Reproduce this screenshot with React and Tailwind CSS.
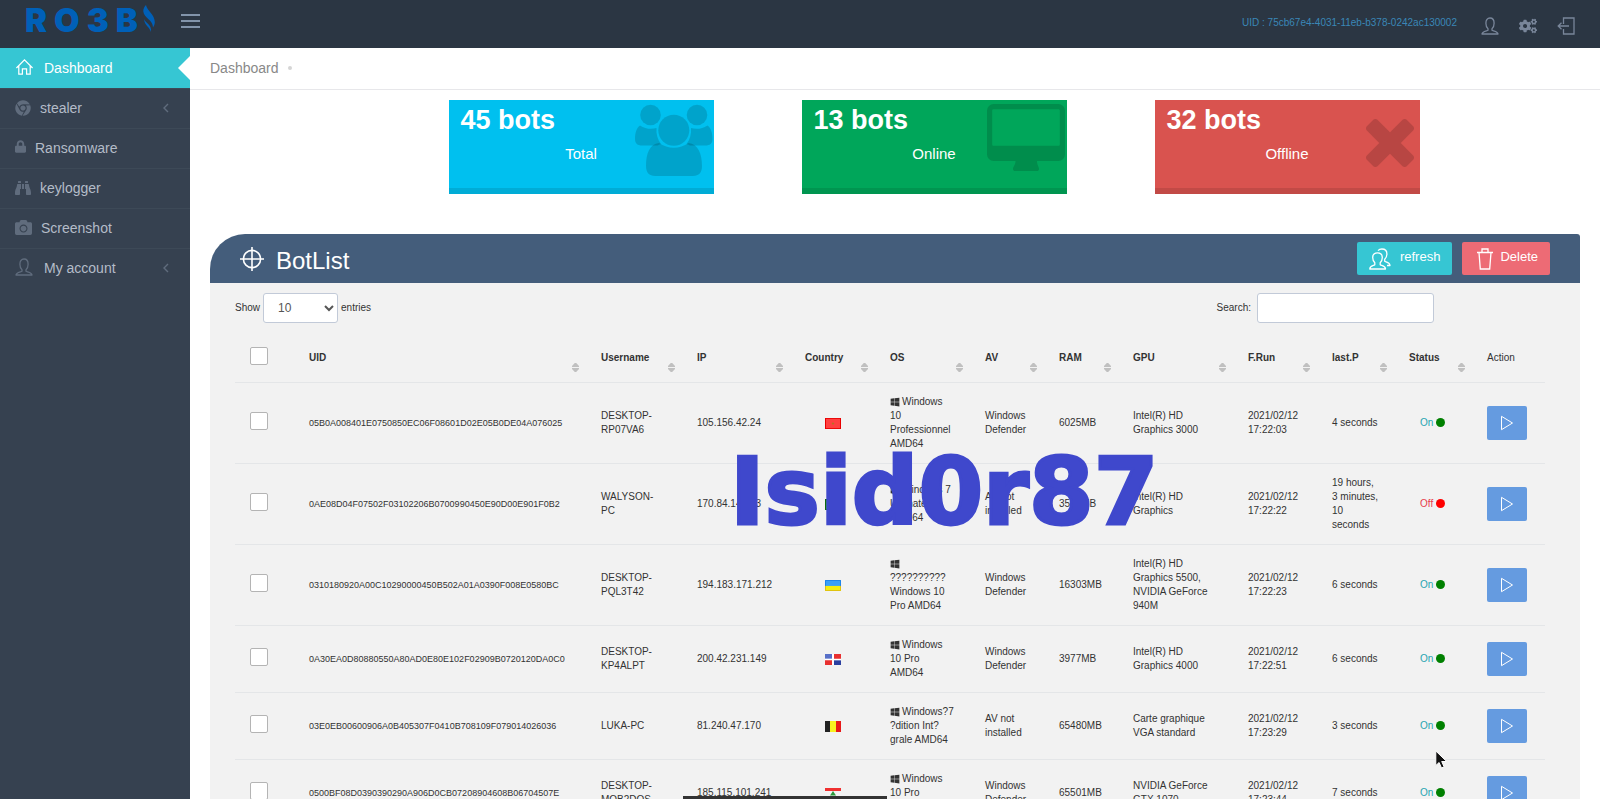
import React from "react";
import { FaChrome, FaLock, FaBinoculars, FaCamera, FaWindows, FaCogs } from "react-icons/fa";

const Line = ({ className, vb = "0 0 24 24", width = 1.2, children }) => (
  <svg className={className} viewBox={vb} fill="none" stroke="currentColor" strokeWidth={width} aria-hidden="true">
    {children}
  </svg>
);

const UserIcon = ({ className }) => (
  <Line className={className} vb="0 0 18 18" width={1.3}>
    <path d="M7 11.8C5.600 10.600 4.900 8.900 4.900 6.200 4.900 3 6.400 1 9 1s4.100 2 4.100 5.200c0 2.700-.7 4.400-2.100 5.600v1.400c1 .7 6 1.200 6 3.800H1c0-2.600 5-3.100 6-3.800z" strokeLinejoin="round" />
  </Line>
);

const HomeIcon = ({ className }) => (
  <Line className={className} vb="0 0 20 20" width={1.3}>
    <path d="M1.500 10.500 10 2l8.500 8.500M4 8.500V17h3.800v-5.500h4.400V17H16V8.500" />
  </Line>
);

const LogoutIcon = ({ className }) => (
  <Line className={className} vb="0 0 18 18" width={1.3}>
    <path d="M6.500 7V1h10.500v16H6.500v-5M12 9H1.200M4.500 5.800 1.200 9l3.300 3.200" />
  </Line>
);

const TargetIcon = ({ className }) => (
  <Line className={className} width={1.6}>
    <circle cx="12" cy="12" r="8.600" />
    <path d="M12 0v24M0 12h24" />
  </Line>
);

const UsersIcon = ({ className }) => (
  <Line className={className} vb="0 0 22 22" width={1.3}>
    <path d="M5.800 14.800C4.500 13.500 3.700 11.700 3.700 9.500 3.700 6.600 5.600 4.800 8.500 4.800s4.800 1.800 4.800 4.700c0 2.200-.8 4-2.100 5.300v2c1 .9 5.300 1 5.300 4.200H.8c0-3.200 4-3.300 5-4.200z" strokeLinejoin="round" />
    <path d="M9 2.600C9.900 1.600 11.200 1 12.900 1c3.200 0 5 1.900 5 4.900 0 2.300-.8 4.100-2.200 5.400v2c1 .8 5.200 1.100 5.300 4.200h-3" strokeLinejoin="round" />
  </Line>
);

const TrashIcon = ({ className }) => (
  <Line className={className} vb="0 0 18 22" width={1.3}>
    <path d="M1 4.500h16M6 4.500V1h6v3.500M3 4.500l1.300 16.500h9.400L15 4.500" />
  </Line>
);

const PlayIcon = ({ className }) => (
  <Line className={className} vb="0 0 14 16" width={1}>
    <path d="M1.500 1.300v13.400L12.500 8z" />
  </Line>
);

const Chevron = () => (
  <Line className="h-3 w-2" vb="0 0 8 12" width={1.4}>
    <path d="M6 2 2 6l4 4" />
  </Line>
);

const PeopleArt = () => (
  <svg className="h-[74px] w-[78px]" viewBox="0 0 78 74" fill="currentColor" aria-hidden="true">
    <circle cx="15.500" cy="11" r="10.300" />
    <circle cx="62" cy="11" r="10.300" />
    <circle cx="38.800" cy="26.300" r="15.500" />
    <path d="M5 21.500c5.500 3.700 11.500 4 16.500 2.500-.5 6 1 11.500 4.500 16-2 .5-2.500 1-3.500 1.500H7c-4.500 0-7-2-7-6.500C0 29 1.500 24 5 21.500z" />
    <path d="M72.500 21.500c-5.500 3.700-11.500 4-16.500 2.500.5 6-1 11.500-4.500 16 2 .5 2.500 1 3.500 1.500h15.500c4.500 0 7-2 7-6.500 0-6-1.500-11-5-13.500z" />
    <path d="M24 39c9 6.300 20.600 6.300 29.600 0C63 40 67 49.500 67 62c0 6.500-3 10-9 10H20c-6 0-9-3.500-9-10 0-12.500 3.600-22 13-23z" />
  </svg>
);

const DesktopArt = () => (
  <svg className="h-[68px] w-[78px]" viewBox="0 0 78 68" fill="currentColor" aria-hidden="true">
    <path fillRule="evenodd" d="M6.500 0h65A6.500 6.500 0 0 1 78 6.500v44a6.500 6.500 0 0 1-6.500 6.500H50c0 4 2 5.500 2 8 0 1.500-1 2-2 2H28c-1 0-2-.5-2-2 0-2.500 2.500-4 2.500-8h-22A6.500 6.500 0 0 1 0 50.500v-44A6.500 6.500 0 0 1 6.500 0zM6.500 5.200a1.300 1.300 0 0 0-1.300 1.300v34c0 .7.600 1.300 1.300 1.300h65c.7 0 1.300-.6 1.300-1.300v-34c0-.7-.6-1.300-1.300-1.300z" />
  </svg>
);

const CrossArt = () => (
  <svg className="h-12 w-12" viewBox="0 0 48 48" fill="currentColor" aria-hidden="true">
    <path d="M11.500.8 24 13.200 36.500.8c1.500-1.100 3-1.100 4.200 0l6.500 6.500c1.100 1.300 1.100 2.900 0 4.200L34.800 24l12.400 12.500c1.100 1.300 1.100 2.900 0 4.200l-6.500 6.500c-1.200 1.100-2.700 1.100-4.200 0L24 34.800 11.500 47.200c-1.500 1.100-3 1.100-4.200 0L.8 40.700c-1.100-1.300-1.100-2.900 0-4.200L13.200 24 .8 11.500c-1.100-1.300-1.100-2.900 0-4.200L7.300.8c1.200-1.100 2.700-1.100 4.200 0z" />
  </svg>
);

const FLAGS = {
  ma: (
    <>
      <rect width="16" height="13" fill="#ff4040" />
      <rect x=".5" y=".5" width="15" height="12" fill="none" stroke="#e80000" />
      <path d="M8 4.500 9 8 6.300 6h3.400L7 8z" fill="#a87820" />
    </>
  ),
  br: (
    <>
      <rect width="16" height="13" fill="#39a339" />
      <rect x=".5" y=".5" width="15" height="12" fill="none" stroke="#0c6a0c" />
      <path d="M8 2l6 4.500L8 11 2 6.500z" fill="#f4ee3c" />
      <circle cx="8" cy="6.500" r="2.800" fill="#3a6cc8" />
    </>
  ),
  ua: (
    <>
      <rect width="16" height="13" fill="#f5ee10" />
      <rect width="16" height="7" fill="#3aa0f8" />
      <path d="M.5 7V.5h15V7" fill="none" stroke="#1b80e8" />
      <path d="M.5 7v5.500h15V7" fill="none" stroke="#dcbc10" />
    </>
  ),
  do: (
    <>
      <rect width="16" height="13" fill="#fff" />
      <path d="M0 0h7v5.500H0z" fill="#5870c8" />
      <path d="M9 7.500h7V13H9z" fill="#2c40a0" />
      <path d="M9 0h7v5.500H9zM0 7.500h7V13H0z" fill="#e83030" />
    </>
  ),
  be: (
    <>
      <rect width="16" height="13" fill="#f8f020" />
      <path d="M0 0h5v13H0z" fill="#222" />
      <path d="M11 0h5v13h-5z" fill="#e81818" />
    </>
  ),
  lb: (
    <>
      <rect width="16" height="13" fill="#f4f4f4" />
      <path d="M0 0h16v3.500H0zM0 9.500h16V13H0z" fill="#f03030" />
      <path d="M8 3.500l3 5.500H5z" fill="#2c9a3c" />
    </>
  ),
};

const Flag = ({ code }) => (
  <svg className="mx-auto mt-0.5 h-[11px] w-4" viewBox="0 0 16 13" preserveAspectRatio="none" role="img" aria-label={code}>
    {FLAGS[code]}
  </svg>
);

const MENU = [
  { label: "Dashboard", icon: <HomeIcon className="-mt-0.5 mr-px h-[19px] w-[19px]" />, active: true },
  { label: "stealer", icon: <FaChrome className="h-4 w-4" />, more: true },
  { label: "Ransomware", icon: <FaLock className="-mt-0.5 h-[13px] w-[11px]" /> },
  { label: "keylogger", icon: <FaBinoculars className="h-4 w-4" /> },
  { label: "Screenshot", icon: <FaCamera className="h-[17px] w-[17px]" /> },
  { label: "My account", icon: <UserIcon className="-mt-0.5 mr-0.5 h-[18px] w-[18px]" />, more: true },
];

const STATS = [
  { count: "45 bots", label: "Total", box: "bg-[#00c0ef]", art: "top-1 right-px", Art: PeopleArt },
  { count: "13 bots", label: "Online", box: "bg-[#00a65a]", art: "top-1 right-0.5", Art: DesktopArt },
  { count: "32 bots", label: "Offline", box: "bg-[#d9534f]", art: "top-[19px] right-1.5", Art: CrossArt },
];

const COLUMNS = [
  ["UID", "w-[292px]"],
  ["Username", "w-[96px]"],
  ["IP", "w-[108px]"],
  ["Country", "w-[85px]"],
  ["OS", "w-[95px]"],
  ["AV", "w-[74px]"],
  ["RAM", "w-[74px]"],
  ["GPU", "w-[115px]"],
  ["F.Run", "w-[84px]"],
  ["last.P", "w-[77px]"],
  ["Status", "w-[78px]"],
];

const ROWS = [
  { uid: "05B0A008401E0750850EC06F08601D02E05B0DE04A076025", user: "DESKTOP-RP07VA6", ip: "105.156.42.24", flag: "ma", os: "Windows 10 Professionnel AMD64", av: "Windows Defender", ram: "6025MB", gpu: "Intel(R) HD Graphics 3000", run: "2021/02/12 17:22:03", last: "4 seconds", on: true },
  { uid: "0AE08D04F07502F03102206B0700990450E90D00E901F0B2", user: "WALYSON-PC", ip: "170.84.149.73", flag: "br", os: "Windows 7 Ultimate AMD64", av: "AV not installed", ram: "3583MB", gpu: "Intel(R) HD Graphics", run: "2021/02/12 17:22:22", last: "19 hours, 3 minutes, 10 seconds", on: false },
  { uid: "0310180920A00C10290000450B502A01A0390F008E0580BC", user: "DESKTOP-PQL3T42", ip: "194.183.171.212", flag: "ua", os: "?????????? Windows 10 Pro AMD64", av: "Windows Defender", ram: "16303MB", gpu: "Intel(R) HD Graphics 5500, NVIDIA GeForce 940M", run: "2021/02/12 17:22:23", last: "6 seconds", on: true },
  { uid: "0A30EA0D80880550A80AD0E80E102F02909B0720120DA0C0", user: "DESKTOP-KP4ALPT", ip: "200.42.231.149", flag: "do", os: "Windows 10 Pro AMD64", av: "Windows Defender", ram: "3977MB", gpu: "Intel(R) HD Graphics 4000", run: "2021/02/12 17:22:51", last: "6 seconds", on: true },
  { uid: "03E0EB00600906A0B405307F0410B708109F079014026036", user: "LUKA-PC", ip: "81.240.47.170", flag: "be", os: "Windows?7 ?dition Int?grale AMD64", av: "AV not installed", ram: "65480MB", gpu: "Carte graphique VGA standard", run: "2021/02/12 17:23:29", last: "3 seconds", on: true },
  { uid: "0500BF08D0390390290A906D0CB07208904608B06704507E", user: "DESKTOP-MOB2DOS", ip: "185.115.101.241", flag: "lb", os: "Windows 10 Pro AMD64", av: "Windows Defender", ram: "65501MB", gpu: "NVIDIA GeForce GTX 1070", run: "2021/02/12 17:23:44", last: "7 seconds", on: true },
];

const Check = ({ label }) => (
  <input
    type="checkbox"
    aria-label={label}
    className="-mt-1 block h-[18px] w-[18px] appearance-none rounded-[2px] border border-[#b4b4b4] bg-white checked:bg-[#36c6d3]"
  />
);

const SortIcon = () => (
  <svg className="absolute right-[7px] bottom-2.5 h-[9px] w-[7px]" viewBox="0 0 7 9" fill="#c0c0c0" aria-hidden="true">
    <path d="M0 4V3L2.800 0h1.400L7 3v1zM0 5v1l2.800 3h1.400L7 6V5z" />
  </svg>
);

function Header() {
  return (
    <header className="flex h-12 shrink-0 items-start bg-[#2b3643]">
      <a href="#home" className="ml-[25px] flex h-10 items-center gap-[7px] font-['Inter',sans-serif] text-[33px] leading-10 font-black text-[#0060b8]">
        <span>R</span>
        <span>O</span>
        <span>3</span>
        <span>B</span>
        <svg className="-mt-1 -ml-0.5 h-[27px] w-3" viewBox="0 0 12 27" fill="currentColor" aria-hidden="true">
          <path d="M3 0C3.500 5 12 9.500 11.800 17.500 11.600 19.500 11 21 10 22.500 10.200 15 1 13 .3 6.500 0 4 1.500 1.500 3 0z" />
          <path d="M1 14c1.500 4 8 5.500 7 13C7 22.500 1.500 20.500 1 14z" />
        </svg>
      </a>
      <button type="button" aria-label="Toggle menu" className="mt-3.5 ml-[26px] flex w-[19px] flex-col gap-1">
        <span className="h-0.5 w-full bg-[#8294aa]" />
        <span className="h-0.5 w-full bg-[#8294aa]" />
        <span className="h-0.5 w-full bg-[#8294aa]" />
      </button>
      <nav className="ml-auto flex items-start pr-[25px] text-[#79869a]">
        <span className="mt-4 mr-6 text-[10px] leading-[14px] text-[#3a87b7]">UID : 75cb67e4-4031-11eb-b378-0242ac130002</span>
        <a href="#profile" aria-label="Profile" className="mt-[17px] mr-5"><UserIcon className="h-[18px] w-[18px]" /></a>
        <a href="#settings" aria-label="Settings" className="mt-4 mr-5"><FaCogs className="h-5 w-[18px]" /></a>
        <a href="#logout" aria-label="Log out" className="mt-[17px]"><LogoutIcon className="h-[18px] w-[18px]" /></a>
      </nav>
    </header>
  );
}

function Sidebar() {
  return (
    <aside className="w-[190px] shrink-0 bg-[#364150]">
      <ul>
        {MENU.map((m) => (
          <li key={m.label} className={m.active ? "bg-[#36c6d3] text-white" : "border-t border-[#3d4957] text-[#b4bcc8]"}>
            <a href={"#" + m.label} className={m.active ? "relative flex h-10 items-center pl-[15px]" : "flex h-[39px] items-center pr-5 pb-0.5 pl-[15px]"}>
              <span className={m.active ? "mr-[9px]" : "mr-[9px] text-[#606c7d]"}>{m.icon}</span>
              <span className="text-sm">{m.label}</span>
              {m.more && <span className="ml-auto text-[#606c7d]"><Chevron /></span>}
              {m.active && (
                <svg className="absolute top-2 right-0 h-6 w-3" viewBox="0 0 12 24" fill="#fff" aria-hidden="true">
                  <path d="M12 0v24L0 12z" />
                </svg>
              )}
            </a>
          </li>
        ))}
      </ul>
    </aside>
  );
}

function BotTable() {
  return (
    <table className="w-full table-fixed border-collapse text-left text-[10px] leading-[14px] text-[#333]">
      <thead>
        <tr className="h-[50px]">
          <th className="w-[59px] px-[15px] pt-0.5"><Check label="Select all" /></th>
          {COLUMNS.map(([name, width]) => (
            <th key={name} className={"relative px-[15px] pt-0.5 font-bold " + width}>
              {name}
              <SortIcon />
            </th>
          ))}
          <th className="w-[73px] px-[15px] pt-0.5 font-normal">Action</th>
        </tr>
      </thead>
      <tbody>
        {ROWS.map((r) => (
          <tr key={r.uid} className="border-t border-[#e4e6e8]">
            <td className="px-[15px] py-3"><Check label={"Select " + r.uid} /></td>
            <td className="px-[15px] py-3 text-[9px]">{r.uid}</td>
            <td className="px-[15px] py-3">{r.user}</td>
            <td className="px-[15px] py-3">{r.ip}</td>
            <td className="px-[15px] py-3"><Flag code={r.flag} /></td>
            <td className="px-[15px] py-3 break-words">
              <FaWindows className="mr-0.5 inline h-2.5 w-2.5 align-[-2px]" />
              {r.os.startsWith("?") ? " " : ""}
              {r.os}
            </td>
            <td className="px-[15px] py-3">{r.av}</td>
            <td className="px-[15px] py-3">{r.ram}</td>
            <td className="px-[15px] py-3">{r.gpu}</td>
            <td className="px-[15px] py-3">{r.run}</td>
            <td className="px-[15px] py-3">{r.last}</td>
            <td className="py-3">
              <span className={r.on ? "flex items-center gap-[3px] pl-[26px] text-[#27a4b0]" : "flex items-center gap-[3px] pl-[26px] text-[#e73d4a]"}>
                {r.on ? "On" : "Off"}
                <span className={r.on ? "h-[9px] w-[9px] rounded-full bg-[#008000]" : "h-[9px] w-[9px] rounded-full bg-[#ff0000]"} />
              </span>
            </td>
            <td className="px-[15px]">
              <button type="button" aria-label={"Run on " + r.user} className="flex h-[34px] w-10 items-center justify-center rounded-[2px] bg-[#659be0] text-white">
                <PlayIcon className="h-4 w-3.5" />
              </button>
            </td>
          </tr>
        ))}
      </tbody>
    </table>
  );
}

export default function App() {
  return (
    <div className="relative flex h-screen flex-col overflow-hidden bg-white font-['Liberation_Sans',Arial,sans-serif] text-[#333]">
      <Header />
      <div className="flex min-h-0 flex-1">
        <Sidebar />
        <main className="min-w-0 flex-1">
          <div className="flex h-[42px] items-center border-b border-[#e7e7ea] px-5 pb-0.5 text-sm text-[#888]">
            Dashboard
            <span className="ml-[9px] h-1 w-1 rounded-full bg-[#d5d5d5]" />
          </div>

          <section className="mt-2.5 flex justify-center gap-[88px] pl-[78px]">
            {STATS.map(({ count, label, box, art, Art }) => (
              <div key={label} className={"relative flex h-[94px] w-[265px] flex-col text-white " + box}>
                <div className={"absolute text-black/15 " + art}><Art /></div>
                <strong className="relative pt-1 pl-3 text-[27px] leading-8">{count}</strong>
                <span className="relative mt-2 text-center text-[15px] leading-5">{label}</span>
                <span className="mt-auto h-1.5 bg-black/10" />
              </div>
            ))}
          </section>

          <section className="mx-5 mt-10">
            <div className="flex h-[49px] items-center rounded-tl-[35px] rounded-tr-[3px] bg-[#445d7b] px-[30px] text-white">
              <TargetIcon className="h-6 w-6" />
              <h1 className="ml-3 pt-1 text-2xl">BotList</h1>
              <div className="ml-auto flex gap-2.5 text-[13px]">
                <button type="button" className="flex h-[33px] items-center rounded-[2px] bg-[#36c6d3] px-3">
                  <UsersIcon className="h-[22px] w-[22px]" />
                  <span className="ml-[9px] pb-1">refresh</span>
                </button>
                <button type="button" className="flex h-[33px] items-center rounded-[2px] bg-[#ed6b75] pr-3 pl-3.5">
                  <TrashIcon className="h-[22px] w-[18px]" />
                  <span className="ml-1.5 pb-1">Delete</span>
                </button>
              </div>
            </div>
            <div className="bg-[#f2f2f2] pt-2.5 pr-[35px] pb-10 pl-[25px] text-[10px]">
              <div className="mb-[9px] flex items-center justify-between pr-[111px]">
                <label className="flex items-center gap-[3px]">
                  <span className="pb-0.5">Show</span>
                  <select defaultValue="10" className="h-[30px] w-[75px] rounded-[3px] border border-[#c2cad8] bg-white pl-2.5 text-[12px] text-[#555]">
                    <option>10</option>
                    <option>25</option>
                    <option>50</option>
                    <option>100</option>
                  </select>
                  <span className="pb-0.5">entries</span>
                </label>
                <label className="flex items-center gap-1.5">
                  <span className="pb-0.5">Search:</span>
                  <input type="search" className="h-[30px] w-[177px] rounded-[3px] border border-[#c2cad8] bg-white px-2 text-[13px]" />
                </label>
              </div>
              <BotTable />
            </div>
          </section>
        </main>
      </div>

      <p className="pointer-events-none absolute top-[438px] left-[730px] font-['DejaVu_Sans',sans-serif] text-[93px] leading-[108px] font-bold text-[#3f48cc] [-webkit-text-stroke:3px_#3f48cc]">Isid0r87</p>
      <div className="absolute bottom-0 left-[683px] h-[3px] w-[204px] bg-[#333]" />
      <svg className="absolute top-[750px] left-[1435px] h-[19px] w-[13px]" viewBox="0 0 13 19" fill="#111" stroke="#fff" strokeWidth="1" aria-hidden="true">
        <path d="M.8 1v14.500l3.300-3 2.400 5.500 2.600-1.200-2.400-5.300h5z" />
      </svg>
    </div>
  );
}
